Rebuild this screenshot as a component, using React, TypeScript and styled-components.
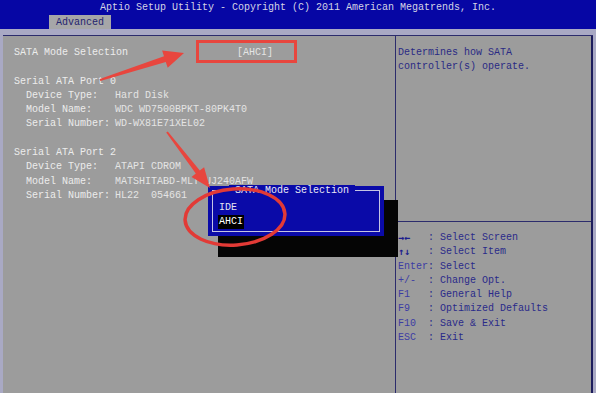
import React from 'react';
import styled, { createGlobalStyle } from 'styled-components';

const GlobalStyle = createGlobalStyle`
  html, body {
    margin: 0;
    padding: 0;
    width: 596px;
    height: 393px;
    overflow: hidden;
    background: #a9a9c4;
  }
  body {
    font-family: "Liberation Mono", "DejaVu Sans Mono", monospace;
    font-size: 10px;
  }
`;

const Screen = styled.div`
  position: relative;
  width: 596px;
  height: 393px;
  display: flex;
  flex-direction: column;
`;

const Header = styled.div`
  height: 29px;
  background: #0606a4;
  display: flex;
  flex-direction: column;
`;

const Title = styled.div`
  height: 15px;
  padding-top: 1px;
  box-sizing: border-box;
  line-height: 14px;
  text-align: center;
  color: #d4d4e4;
  white-space: pre;
`;

const TabRow = styled.div`
  display: flex;
  padding-left: 49px;
  flex: 1;
`;

const Tab = styled.div`
  background: #a6a6a8;
  color: #24246e;
  padding: 1px 7px 0 7px;
  line-height: 13px;
`;

const Main = styled.div`
  flex: 1;
  margin: 6px 3px 0 3px;
  border-top: 1px solid #2c2c6c;
  background: #9c9c9c;
  display: flex;
`;

const LeftPanel = styled.div`
  width: 381px;
  padding: 10px 0 0 11px;
  border-right: 1px solid #2c2c6c;
  line-height: 14.3px;
  color: #ececec;
`;

const RightPanel = styled.div`
  flex: 1;
  border-right: 2px solid #1c1c5c;
  display: flex;
  flex-direction: column;
`;

const Row = styled.div<{ $indent?: boolean }>`
  display: flex;
  height: 14.3px;
  padding-left: ${p => (p.$indent ? '12px' : '0')};
  white-space: pre;
`;

const Label = styled.span<{ $w: number }>`
  width: ${p => p.$w}px;
  flex-shrink: 0;
`;

const Value = styled.span`
  color: #e4e4e4;
`;

const Spacer = styled.div`
  height: 14.3px;
`;

const Description = styled.div`
  height: 175px;
  padding: 10px 0 0 2px;
  line-height: 14.3px;
  color: #2a2a84;
`;

const Divider = styled.div`
  height: 1px;
  background: #2c2c6c;
`;

const HelpList = styled.div`
  padding: 9px 0 0 2px;
  line-height: 14.3px;
`;

const HelpRow = styled.div`
  display: flex;
  white-space: pre;
`;

const HelpKey = styled.span<{ $arrow?: boolean }>`
  width: 30px;
  color: ${p => (p.$arrow ? '#1c1c8c' : '#3c3ca4')};
  font-weight: ${p => (p.$arrow ? 'bold' : 'normal')};
  font-family: ${p => (p.$arrow ? '"DejaVu Sans Mono", monospace' : 'inherit')};
`;

const HelpText = styled.span`
  color: #2a2a8a;
`;

const Shadow = styled.div`
  position: absolute;
  left: 218px;
  top: 200px;
  width: 180px;
  height: 57px;
  background: #050505;
`;

const Popup = styled.div`
  position: absolute;
  left: 208px;
  top: 186px;
  width: 176px;
  height: 50px;
  background: #0a0aa8;
  box-sizing: border-box;
  padding: 4px;
`;

const PopupFrame = styled.div`
  position: relative;
  height: 100%;
  box-sizing: border-box;
  border: 1px solid #c4c4e4;
  padding: 10px 0 0 5px;
  line-height: 14px;
  color: #e8e8f4;
`;

const PopupTitle = styled.div`
  position: absolute;
  top: -6px;
  left: 0;
  right: 8px;
  text-align: center;
  line-height: 12px;
  white-space: pre;
  & > span {
    background: #0a0aa8;
  }
`;

const Option = styled.div<{ $selected?: boolean }>`
  display: flex;
  & > span {
    background: ${p => (p.$selected ? '#000' : 'transparent')};
    color: ${p => (p.$selected ? '#fff' : '#e4e4f0')};
    padding: 0 1px;
  }
`;

const Marker = styled.div`
  position: absolute;
  left: 196px;
  top: 40px;
  width: 101px;
  height: 23px;
  box-sizing: border-box;
  border: 3px solid #e8463e;
`;

const Annotations = styled.svg`
  position: absolute;
  left: 0;
  top: 0;
  width: 596px;
  height: 393px;
  pointer-events: none;
`;

const help = [
  ['→←', ': Select Screen', true],
  ['↑↓', ': Select Item', true],
  ['Enter', ': Select', false],
  ['+/-', ': Change Opt.', false],
  ['F1', ': General Help', false],
  ['F9', ': Optimized Defaults', false],
  ['F10', ': Save & Exit', false],
  ['ESC', ': Exit', false],
] as const;

const ports = [
  {
    name: 'Serial ATA Port 0',
    rows: [
      ['Device Type:', 'Hard Disk'],
      ['Model Name:', 'WDC WD7500BPKT-80PK4T0'],
      ['Serial Number:', 'WD-WX81E71XEL02'],
    ],
  },
  {
    name: 'Serial ATA Port 2',
    rows: [
      ['Device Type:', 'ATAPI CDROM'],
      ['Model Name:', 'MATSHITABD-MLT UJ240AFW'],
      ['Serial Number:', 'HL22  054661'],
    ],
  },
];

export default function App() {
  return (
    <Screen>
      <GlobalStyle />
      <Header>
        <Title>Aptio Setup Utility - Copyright (C) 2011 American Megatrends, Inc.</Title>
        <TabRow>
          <Tab>Advanced</Tab>
        </TabRow>
      </Header>
      <Main>
        <LeftPanel>
          <Row>
            <Label $w={223}>SATA Mode Selection</Label>
            <Value>[AHCI]</Value>
          </Row>
          {ports.map(port => (
            <React.Fragment key={port.name}>
              <Spacer />
              <Row>{port.name}</Row>
              {port.rows.map(([k, v]) => (
                <Row $indent key={k}>
                  <Label $w={89}>{k}</Label>
                  <Value>{v}</Value>
                </Row>
              ))}
            </React.Fragment>
          ))}
        </LeftPanel>
        <RightPanel>
          <Description>
            Determines how SATA
            <br />
            controller(s) operate.
          </Description>
          <Divider />
          <HelpList>
            {help.map(([k, t, arrow]) => (
              <HelpRow key={k}>
                <HelpKey $arrow={arrow}>{k}</HelpKey>
                <HelpText>{t}</HelpText>
              </HelpRow>
            ))}
          </HelpList>
        </RightPanel>
      </Main>

      <Shadow />
      <Popup>
        <PopupFrame>
          <PopupTitle>
            <span> SATA Mode Selection </span>
          </PopupTitle>
          <Option>
            <span>IDE</span>
          </Option>
          <Option $selected>
            <span>AHCI</span>
          </Option>
        </PopupFrame>
      </Popup>

      <Marker />
      <Annotations viewBox="0 0 596 393">
        <polygon
          fill="#e8463e"
          points="100.3,81 165.8,62 167.7,67.7 184,53 162.1,50.5 164,56.2 99.7,79"
        />
        <polygon
          fill="#e8463e"
          points="167.8,131.4 199.8,170.6 204.1,167.2 210,188 191.5,177 195.8,173.6 166.2,132.6"
        />
        <ellipse
          cx="235"
          cy="217"
          rx="50"
          ry="28"
          fill="none"
          stroke="#e23a36"
          strokeWidth="3.5"
          transform="rotate(-4 235 217)"
        />
      </Annotations>
    </Screen>
  );
}
